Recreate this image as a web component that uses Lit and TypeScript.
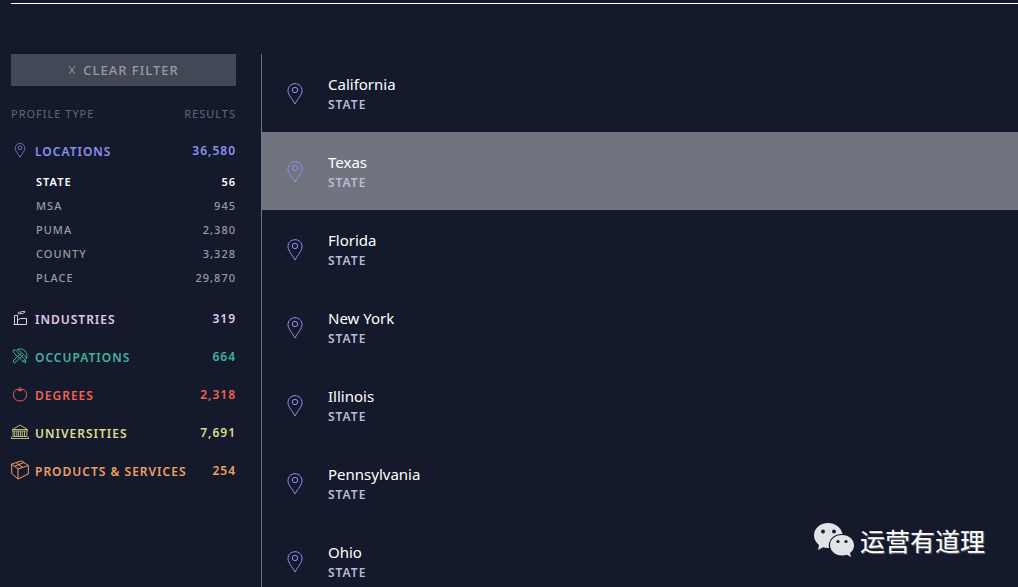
import { LitElement, html, svg, css } from "lit";
import { customElement, property, state } from "lit/decorators.js";
import { classMap } from "lit/directives/class-map.js";

const pin = svg`<path d="M8 21C5.500 16 1 12 1 7.700C1 3.500 4 .700 8 .700S15 3.500 15 7.700C15 12 10.500 16 8 21Z"/><circle cx="8" cy="7" r="2.700"/>`;

const icons = {
  locations: { box: "0 0 16 22", art: pin },
  industries: {
    box: "0 0 14 15",
    art: svg`<path d="M1.500 13.500V4.500H4.500V13.500M.500 13.500H13.500V7.500H7.500L4.500 9.500"/><path d="M5 2.500C5 1.200 6.500 1 7.500 1.200C9 .200 11 .300 12 .700C11.500 2.300 9.500 2.600 8 2.400C7 3 5.500 3 5 2.500Z"/>`,
  },
  occupations: {
    box: "0 0 16 16",
    art: svg`<path d="M1 2.500L3 1.500L13 11.500L14 14.500L11 13.500L1.500 4.500ZM11 13.500L13 11.500"/><path d="M9.500 4.500L1 13L2.500 15L11.500 6.500"/><path d="M5 1.500C8.500 .200 11.500 1.200 13 3C15 5 15.500 8 14.500 11C14 9 13 7.500 11.500 6.500L9.500 4.500C8.300 3.200 7 2.300 5 1.500Z"/>`,
  },
  degrees: {
    box: "0 0 14 15",
    art: svg`<path d="M7 2.800C4 .900 .500 3.500 .500 7.500C.600 11.500 3.500 14.500 7 13.800C10.500 14.500 13.400 11.500 13.500 7.500C13.500 3.500 10 .900 7 2.800ZM7 3.500V0M4.500 2.800L7 4L9.500 2.800"/>`,
  },
  universities: {
    box: "0 0 18 16",
    art: svg`<path d="M1.500 5.500L9 1L16.500 5.500ZM1.500 5.500V7H16.500V5.500"/><path d="M2 7V12.500M3.700 7V12.500M5.800 7V12.500M7.500 7V12.500M9.500 7V12.500M11.300 7V12.500M13.500 7V12.500M15.800 7V12.500M1.500 12.500H16.500M.500 14.500H17.500M.500 13V15M17.500 13V15"/>`,
  },
  products: {
    box: "0 0 18 20",
    art: svg`<path d="M.700 4L10.500 .800L17.300 5.500L7 9ZM.700 4V13.500L7 19L17.300 14V5.500M7 9V19M3.700 6.300L13 2.500M5.500 3L11.500 7.200"/>`,
  },
};

type IconName = keyof typeof icons;

@customElement("profile-icon")
class ProfileIcon extends LitElement {
  @property() name: IconName = "locations";

  static styles = css`
    :host {
      display: flex;
    }
    .art {
      width: 100%;
      height: 100%;
      fill: none;
      stroke: currentColor;
      stroke-width: 1;
      overflow: visible;
    }
  `;

  render() {
    const icon = icons[this.name];
    return html`<svg class="art" viewBox=${icon.box} aria-hidden="true">${icon.art}</svg>`;
  }
}

const categories: { id: IconName; label: string; count: string }[] = [
  { id: "locations", label: "Locations", count: "36,580" },
  { id: "industries", label: "Industries", count: "319" },
  { id: "occupations", label: "Occupations", count: "664" },
  { id: "degrees", label: "Degrees", count: "2,318" },
  { id: "universities", label: "Universities", count: "7,691" },
  { id: "products", label: "Products & Services", count: "254" },
];

const levels = [
  ["State", "56"],
  ["MSA", "945"],
  ["PUMA", "2,380"],
  ["County", "3,328"],
  ["Place", "29,870"],
];

const places = ["California", "Texas", "Florida", "New York", "Illinois", "Pennsylvania", "Ohio"];

@customElement("app-root")
class AppRoot extends LitElement {
  @state() private level = "State";
  @state() private active = "Texas";

  static styles = css`
    :host {
      display: flex;
      flex-direction: column;
      position: relative;
      box-sizing: border-box;
      height: 100vh;
      overflow: hidden;
      padding: 3px 0 0 11px;
      background: #14192c;
      color: #fff;
      font-family: "Noto Sans", "Open Sans", sans-serif;
    }
    .rule {
      flex: none;
      height: 1px;
      margin-bottom: 50px;
      background: #fff;
    }
    .page {
      flex: 1;
      min-height: 0;
      display: grid;
      grid-template-columns: 225px 1fr;
      gap: 25px;
    }
    button {
      border: 0;
      padding: 0;
      background: none;
      color: inherit;
      font: inherit;
      letter-spacing: inherit;
      text-transform: inherit;
      cursor: pointer;
    }
    .filters {
      text-transform: uppercase;
      letter-spacing: 1px;
    }
    .clear {
      display: flex;
      align-items: center;
      justify-content: center;
      gap: 7px;
      width: 100%;
      height: 32px;
      background: #434857;
      color: #989ba3;
      font-size: 13px;
      font-weight: 500;
    }
    .cross {
      width: 8px;
      height: 8px;
      stroke: currentColor;
    }
    .heads {
      display: flex;
      justify-content: space-between;
      margin: 18px 0 8px;
      color: #646876;
      font-size: 11px;
      line-height: 20px;
    }
    .category {
      display: grid;
      grid-template-columns: 18px 1fr auto;
      align-items: center;
      gap: 6px;
      width: 100%;
      height: 38px;
      text-align: left;
      font-size: 12px;
      font-weight: 600;
    }
    .count {
      padding-bottom: 2px;
    }
    .mark {
      justify-self: center;
      width: 14px;
      height: 15px;
      margin-bottom: 2px;
    }
    .mark.occupations {
      width: 16px;
      height: 16px;
    }
    .mark.universities {
      width: 18px;
      height: 16px;
      opacity: 0.8;
    }
    .mark.products {
      width: 18px;
      height: 20px;
    }
    .locations { color: #8b92f0; }
    .industries { color: #e3c9e6; }
    .occupations { color: #41b3a0; }
    .degrees { color: #ee6352; }
    .universities { color: #dbde8a; }
    .products { color: #f0a060; }
    .levels {
      margin: -1px 0 11px;
      padding-left: 25px;
    }
    .level {
      display: flex;
      justify-content: space-between;
      align-items: center;
      width: 100%;
      height: 24px;
      color: #989ba3;
      font-size: 11px;
      font-weight: 500;
    }
    .level.on {
      color: #fff;
      font-weight: 600;
    }
    .results {
      overflow: hidden;
      border-left: 1px solid #70747f;
    }
    .result {
      display: flex;
      align-items: center;
      gap: 25px;
      box-sizing: border-box;
      height: 78px;
      padding: 2px 0 0 25px;
      color: #fff;
      text-decoration: none;
    }
    .result.on {
      background: #70747f;
    }
    .pin {
      width: 16px;
      height: 22px;
      color: #8b92f0;
    }
    .words {
      display: flex;
      flex-direction: column;
    }
    .name {
      font-size: 15px;
      line-height: 22px;
    }
    .kind {
      color: #b9bdd8;
      font-size: 12px;
      font-weight: 600;
      line-height: 20px;
      letter-spacing: 1px;
      text-transform: uppercase;
    }
    .watermark {
      position: absolute;
      right: 33px;
      bottom: 28px;
      display: flex;
      align-items: center;
      gap: 6px;
      font-family: "Noto Sans CJK SC", sans-serif;
      font-size: 25px;
      line-height: 38px;
      text-shadow: 1px 1px 1px #777;
    }
    .bubbles {
      width: 40px;
      height: 36px;
    }
  `;

  private renderLevels() {
    return html`<div class="levels">
      ${levels.map(
        ([label, count]) => html`<button
          class=${classMap({ level: true, on: label === this.level })}
          @click=${() => (this.level = label)}
        >
          <span>${label}</span><span>${count}</span>
        </button>`,
      )}
    </div>`;
  }

  render() {
    return html`
      <div class="rule"></div>
      <div class="page">
        <aside class="filters">
          <button class="clear" @click=${() => (this.level = "")}>
            <svg class="cross" viewBox="0 0 8 8" aria-hidden="true"><path d="M1 0L7 8M7 0L1 8" /></svg>
            Clear filter
          </button>
          <div class="heads"><span>Profile type</span><span>Results</span></div>
          ${categories.map(
            (c) => html`<button class="category ${c.id}">
                <profile-icon class="mark ${c.id}" .name=${c.id}></profile-icon>
                <span>${c.label}</span><span class="count">${c.count}</span>
              </button>
              ${c.id === "locations" ? this.renderLevels() : ""}`,
          )}
        </aside>
        <main class="results">
          ${places.map(
            (place) => html`<a
              href="#"
              class=${classMap({ result: true, on: place === this.active })}
              @mouseenter=${() => (this.active = place)}
            >
              <profile-icon class="pin"></profile-icon>
              <span class="words"><span class="name">${place}</span><span class="kind">State</span></span>
            </a>`,
          )}
        </main>
      </div>
      <div class="watermark">
        <svg class="bubbles" viewBox="0 0 40 36" aria-hidden="true">
          <path fill="#e2e3e6" d="M14 1C6 1 0 6.500 0 13.500C0 17.500 2 20.500 5 23L4 28L9 25.300C11 26 13 26.200 15 26C13.500 18 20 11.700 28.500 12C27 5 21 1 14 1Z" />
          <path fill="#e2e3e6" d="M28 13C21 13 16 17.500 16 23S21 33.500 28 33.500C29.500 33.500 31.500 33.200 33 32.700L37 35L36 31C38.500 29 40 26.500 40 23.500C40 17.500 35 13 28 13Z" />
          <g fill="#14192c"><circle cx="9" cy="9.500" r="1.900" /><circle cx="20" cy="9.500" r="1.900" /><circle cx="24" cy="19.500" r="1.600" /><circle cx="32" cy="19.500" r="1.600" /></g>
        </svg>
        <span>运营有道理</span>
      </div>
    `;
  }
}
